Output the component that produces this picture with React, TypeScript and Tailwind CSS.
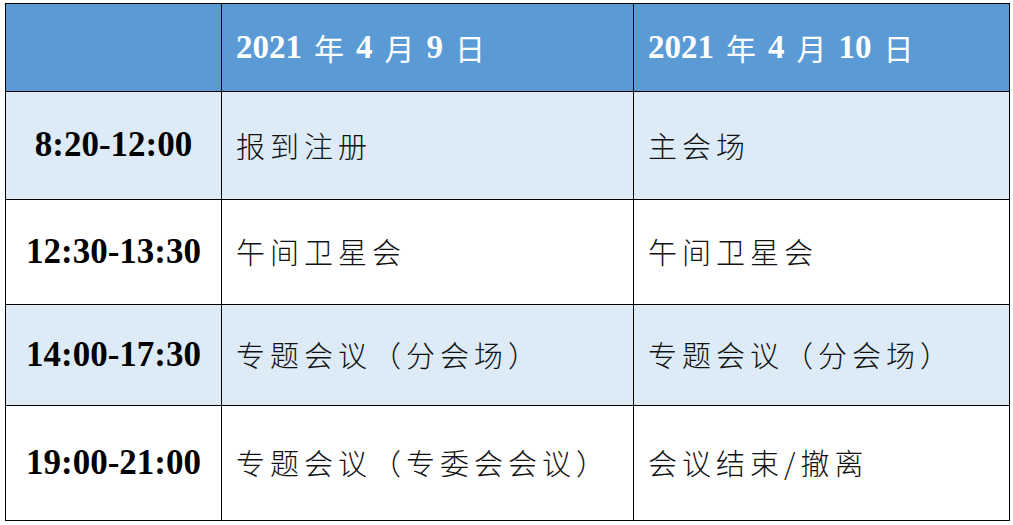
import React from "react"

const rows = [
  { time: "8:20-12:00", day1: "报到注册", day2: "主会场", shade: true, h: "h-[108px]" },
  { time: "12:30-13:30", day1: "午间卫星会", day2: "午间卫星会", shade: false, h: "h-[105px]" },
  { time: "14:00-17:30", day1: "专题会议（分会场）", day2: "专题会议（分会场）", shade: true, h: "h-[101px]" },
  { time: "19:00-21:00", day1: "专题会议（专委会会议）", day2: "会议结束/撤离", shade: false, h: "h-[115px]" },
]

function DateHead({ day }: { day: string }) {
  const cjk = "font-normal text-[30px] font-['Noto_Sans_CJK_SC',sans-serif]"
  return (
    <th className="border border-black pl-[14px] text-white">
      <div className="flex items-center gap-[12px] font-bold text-[33px] font-['Liberation_Serif',serif]">
        <span>2021</span>
        <span className={cjk}>年</span>
        <span>4</span>
        <span className={cjk}>月</span>
        <span>{day}</span>
        <span className={cjk}>日</span>
      </div>
    </th>
  )
}

export default function App() {
  return (
    <div className="w-[1013px] h-[525px] bg-white pl-[5px] pt-[3px]">
      <table className="border-collapse table-fixed w-[1004px]">
        <colgroup>
          <col className="w-[216px]" />
          <col className="w-[412px]" />
          <col className="w-[376px]" />
        </colgroup>
        <thead>
          <tr className="h-[88px] bg-[#5b9bd5]">
            <th className="border border-black"></th>
            <DateHead day="9" />
            <DateHead day="10" />
          </tr>
        </thead>
        <tbody>
          {rows.map((r) => (
            <tr key={r.time} className={`${r.h} ${r.shade ? "bg-[#ddebf7]" : "bg-white"}`}>
              <td className="border border-black text-center font-bold text-[35px] text-black font-['Liberation_Serif',serif]">
                {r.time}
              </td>
              <td className="border border-black pl-[14px] text-[29px] tracking-[5px] font-light text-[#111] font-['Noto_Sans_CJK_SC',sans-serif]">
                {r.day1}
              </td>
              <td className="border border-black pl-[14px] text-[29px] tracking-[5px] font-light text-[#111] font-['Noto_Sans_CJK_SC',sans-serif]">
                {r.day2}
              </td>
            </tr>
          ))}
        </tbody>
      </table>
    </div>
  )
}
